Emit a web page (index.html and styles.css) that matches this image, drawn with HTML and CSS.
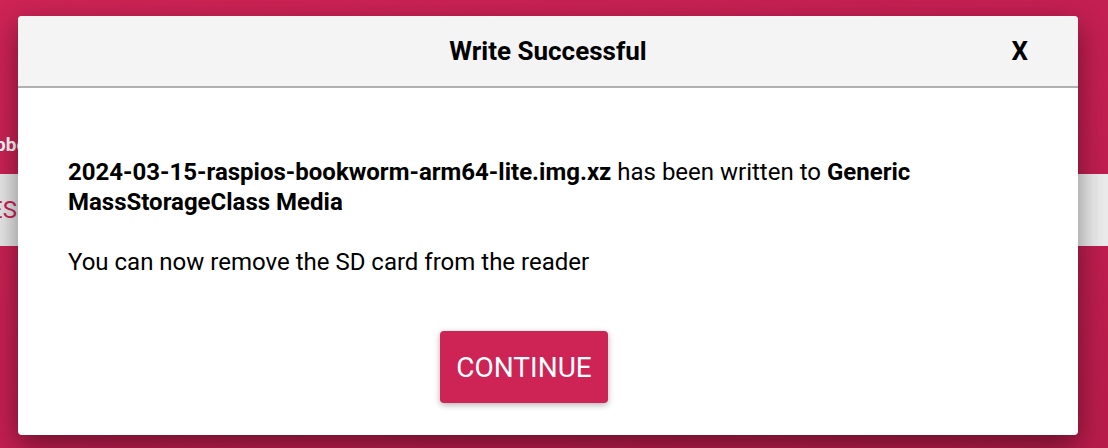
FILE: index.html
```html
<!DOCTYPE html>
<html>
<head>
<meta charset="utf-8">
<link rel="stylesheet" href="styles.css">
</head>
<body>
<div class="app">
  <div class="app-row">
    <div class="app-col app-col-first">
      <div class="app-label">Raspberry Pi Device</div>
      <button class="app-btn">CHOOSE DEVICES</button>
    </div>
    <div class="app-col">
      <div class="app-label">Operating System</div>
      <button class="app-btn">CHOOSE OS</button>
    </div>
    <div class="app-col">
      <div class="app-label">Storage</div>
      <button class="app-btn">CHOOSE STORAGE</button>
    </div>
  </div>
</div>
<div class="modal">
  <div class="modal-head">
    <span></span>
    <h1 class="modal-title">Write Successful</h1>
    <span class="modal-close">X</span>
  </div>
  <div class="modal-body">
    <p class="msg"><b>2024-03-15-raspios-bookworm-arm64-lite.img.xz</b> has been written to <b>Generic MassStorageClass Media</b></p>
    <p class="msg">You can now remove the SD card from the reader</p>
    <div class="actions">
      <button class="continue">CONTINUE</button>
    </div>
  </div>
</div>
</body>
</html>
```

FILE: styles.css
```css
html, body {
  margin: 0;
  padding: 0;
}
body {
  width: 1108px;
  height: 448px;
  overflow: hidden;
  position: relative;
  font-family: Roboto, "Liberation Sans", sans-serif;
  background: linear-gradient(160deg, #cd2355 0%, #c41f52 50%, #b81c4b 100%);
}
.app {
  padding-top: 134px;
}
.app-row {
  display: flex;
  justify-content: center;
  gap: 40px;
}
.app-col {
  width: 364px;
  flex: none;
  display: flex;
  flex-direction: column;
  gap: 18px;
}
.app-label {
  color: #fff;
  font-weight: 700;
  font-size: 19px;
  line-height: 22px;
  height: 22px;
  text-align: center;
  white-space: nowrap;
}
.app-col-first .app-label {
  text-align: left;
  margin-left: -5px;
}
.app-btn {
  height: 72px;
  border: none;
  background: linear-gradient(90deg, #e6e6e6, #ececec);
  color: #c92256;
  font-family: Roboto, "Liberation Sans", sans-serif;
  font-size: 24px;
  white-space: nowrap;
  display: flex;
  align-items: center;
  justify-content: center;
  padding: 0;
  overflow: hidden;
}
.app-col-first .app-btn {
  justify-content: flex-end;
  padding-right: 315px;
}
.modal {
  position: absolute;
  left: 18px;
  top: 16px;
  width: 1060px;
  height: 419px;
  background: #fff;
  border-radius: 4px;
  overflow: hidden;
  box-shadow: 0 10px 28px rgba(0, 0, 0, 0.45);
}
.modal-head {
  height: 70px;
  background: #f4f4f4;
  border-bottom: 2px solid #b0b0b0;
  display: grid;
  grid-template-columns: 1fr auto 1fr;
  align-items: center;
}
.modal-title {
  margin: 0;
  font-size: 26px;
  font-weight: 700;
  color: #000;
}
.modal-close {
  justify-self: end;
  padding-right: 50px;
  font-size: 26px;
  font-weight: 700;
  color: #000;
}
.modal-body {
  padding: 69px 50px 0;
}
.msg {
  margin: 0 0 30px;
  font-size: 24px;
  line-height: 30px;
  color: #000;
}
.msg b {
  font-weight: 700;
}
.actions {
  display: flex;
  justify-content: center;
  padding-right: 48px;
  padding-top: 24px;
}
.continue {
  width: 168px;
  height: 72px;
  border: none;
  border-radius: 4px;
  background: #cd2355;
  color: #fff;
  font-family: Roboto, "Liberation Sans", sans-serif;
  font-size: 28px;
  box-shadow: 0 2px 6px rgba(0, 0, 0, 0.3);
}
```
